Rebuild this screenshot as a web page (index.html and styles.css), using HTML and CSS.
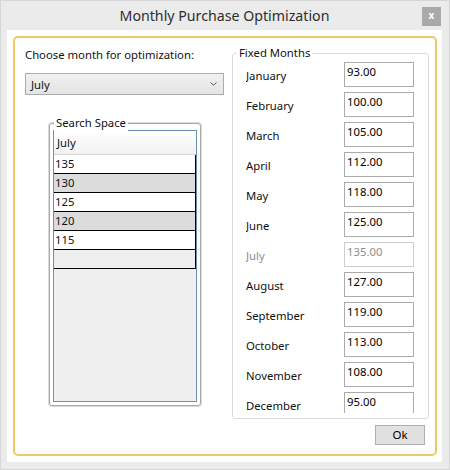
FILE: index.html
```html
<!DOCTYPE html>
<html>
<head>
<meta charset="utf-8">
<link rel="stylesheet" href="styles.css">
</head>
<body>
<div class="window">
  <div class="titlebar">
    <span class="title">Monthly Purchase Optimization</span>
    <span class="close">x</span>
  </div>
  <div class="client">
    <div class="frame">
      <div class="main">
        <div class="left">
          <div class="prompt">Choose month for optimization:</div>
          <div class="combo">
            <span>July</span>
            <svg class="chevron" width="7" height="4" viewBox="0 0 7 4"><polyline points="0.5,0.5 3.5,3.2 6.5,0.5" fill="none" stroke="#555" stroke-width="1"/></svg>
          </div>
          <div class="search-group">
            <span class="group-title">Search Space</span>
            <div class="grid">
              <div class="grid-header">July</div>
              <div class="grid-row">135</div>
              <div class="grid-row alt">130</div>
              <div class="grid-row">125</div>
              <div class="grid-row alt">120</div>
              <div class="grid-row">115</div>
              <div class="grid-row new"></div>
            </div>
          </div>
        </div>
        <div class="fixed-group">
          <span class="group-title">Fixed Months</span>
          <div class="months">
            <div class="month-row"><span class="month">January</span><span class="value">93.00</span></div>
            <div class="month-row"><span class="month">February</span><span class="value">100.00</span></div>
            <div class="month-row"><span class="month">March</span><span class="value">105.00</span></div>
            <div class="month-row"><span class="month">April</span><span class="value">112.00</span></div>
            <div class="month-row"><span class="month">May</span><span class="value">118.00</span></div>
            <div class="month-row"><span class="month">June</span><span class="value">125.00</span></div>
            <div class="month-row disabled"><span class="month">July</span><span class="value">135.00</span></div>
            <div class="month-row"><span class="month">August</span><span class="value">127.00</span></div>
            <div class="month-row"><span class="month">September</span><span class="value">119.00</span></div>
            <div class="month-row"><span class="month">October</span><span class="value">113.00</span></div>
            <div class="month-row"><span class="month">November</span><span class="value">108.00</span></div>
            <div class="month-row"><span class="month">December</span><span class="value">95.00</span></div>
          </div>
        </div>
      </div>
      <div class="footer">
        <button class="ok">Ok</button>
      </div>
    </div>
  </div>
</div>
</body>
</html>
```

FILE: styles.css
```css
* { box-sizing: border-box; }
html, body { margin: 0; padding: 0; }
body {
  font-family: "Noto Sans", "Open Sans", sans-serif;
  font-size: 11.3px;
  color: #1a1a1a;
}
.window {
  width: 450px;
  height: 470px;
  border: 1px solid #d6d6d6;
  background: #ebebeb;
  display: flex;
  flex-direction: column;
  padding: 0 7px 7px 6px;
}
.titlebar {
  height: 29px;
  flex: none;
  display: grid;
  grid-template-columns: 1fr auto 1fr;
  align-items: center;
}
.title {
  grid-column: 2;
  font-size: 14.2px;
  line-height: 29px;
  color: #2e2e2e;
}
.close {
  grid-column: 3;
  justify-self: end;
  margin-right: 1px;
  margin-top: 2px;
  width: 19px;
  height: 19px;
  background: #a9a9a9;
  color: #fff;
  font-weight: bold;
  font-size: 10px;
  line-height: 17px;
  text-align: center;
}
.client {
  flex: 1;
  background: #fff;
  padding: 6px 5px 6px 6px;
}
.frame {
  height: 100%;
  border: 2px solid #ecca68;
  border-radius: 5px;
  display: flex;
  flex-direction: column;
}
.main {
  display: flex;
  align-items: flex-start;
  padding-left: 10px;
  gap: 8px;
}
.left {
  width: 199px;
  flex: none;
  display: flex;
  flex-direction: column;
}
.prompt {
  margin-top: 9px;
  line-height: 16px;
  color: #111;
}
.combo {
  margin-top: 10px;
  height: 22px;
  border: 1px solid #acacac;
  background: linear-gradient(#f0f0f0, #e5e5e5);
  display: flex;
  align-items: center;
  justify-content: space-between;
  padding: 0 6px 0 5px;
  color: #111;
}
.chevron { display: block; }
.search-group {
  position: relative;
  margin-top: 28px;
  margin-left: 24px;
  width: 152px;
  height: 283px;
  border: 1px solid #a9a9a9;
  border-radius: 3px;
  box-shadow: 0 0 0 1px #dadada;
  padding: 6px 3px 3px 3px;
}
.group-title {
  position: absolute;
  top: -9px;
  left: 4px;
  padding: 0 2px;
  background: #fff;
  line-height: 16px;
  color: #111;
}
.grid {
  height: 100%;
  border: 1px solid #6b8fb7;
  background: #f0f0f0;
}
.grid-header {
  height: 24px;
  border-bottom: 1px solid #d5d5d5;
  background: linear-gradient(#ffffff, #f1f1f1);
  padding-left: 3px;
  line-height: 23px;
  color: #111;
}
.grid-row {
  height: 19px;
  border-right: 1px solid #000;
  border-bottom: 1px solid #000;
  background: #fff;
  padding-left: 1px;
  line-height: 18px;
  color: #111;
}
.grid-row.alt { background: #dcdcdc; }
.grid-row.new { background: #efefef; }
.fixed-group {
  position: relative;
  margin-top: 15px;
  width: 197px;
  height: 366px;
  border: 1px solid #d5dde3;
  border-radius: 3px;
  padding: 8px 14px 5px 13px;
}
.months {
  height: 351px;
  overflow: hidden;
  display: flex;
  flex-direction: column;
  gap: 5px;
}
.month-row {
  flex: none;
  display: grid;
  grid-template-columns: 98px 70px;
  height: 25px;
}
.month {
  align-self: center;
  padding-top: 2px;
  color: #111;
}
.value {
  border: 1px solid #ababab;
  padding: 1px 2px;
  line-height: 16px;
  color: #000;
}
.month-row.disabled .month { color: #8e8e8e; }
.month-row.disabled .value { color: #8e8e8e; border-color: #cdcdcd; }
.footer {
  display: flex;
  justify-content: flex-end;
  padding-right: 10px;
  margin-top: 6px;
}
.ok {
  width: 50px;
  height: 20px;
  border: 1px solid #adadad;
  background: #e1e1e1;
  font-family: inherit;
  font-size: 11.5px;
  color: #000;
  padding: 0;
  line-height: 18px;
}
```
